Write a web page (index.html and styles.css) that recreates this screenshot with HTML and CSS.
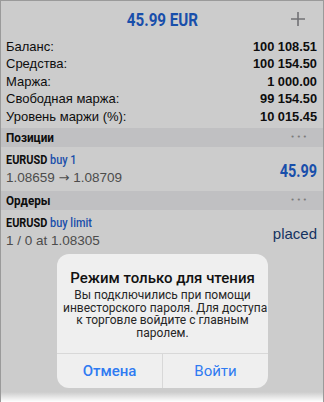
FILE: index.html
```html
<!DOCTYPE html>
<html lang="ru">
<head>
<meta charset="utf-8">
<link rel="stylesheet" href="styles.css">
</head>
<body>
<div class="screen">
  <div class="app">
    <header class="top">
      <div class="total">45.99 EUR</div>
      <svg class="plus" width="16" height="16" viewBox="0 0 16 16"><path d="M8 1v14M1 8h14" stroke="#8e8e93" stroke-width="1.6" fill="none"/></svg>
    </header>
    <div class="summary">
      <div class="row"><span>Баланс:</span><b>100 108.51</b></div>
      <div class="row"><span>Средства:</span><b>100 154.50</b></div>
      <div class="row"><span>Маржа:</span><b>1 000.00</b></div>
      <div class="row"><span>Свободная маржа:</span><b>99 154.50</b></div>
      <div class="row"><span>Уровень маржи (%):</span><b>10 015.45</b></div>
    </div>
    <div class="section"><span class="sec-title">Позиции</span><span class="dots">•••</span></div>
    <div class="item">
      <div class="info">
        <div class="sym">EURUSD <span class="blue">buy 1</span></div>
        <div class="sub">1.08659 <span class="arrow">→</span> 1.08709</div>
      </div>
      <div class="profit">45.99</div>
    </div>
    <div class="section"><span class="sec-title">Ордеры</span><span class="dots">•••</span></div>
    <div class="item">
      <div class="info">
        <div class="sym">EURUSD <span class="blue">buy limit</span></div>
        <div class="sub">1 / 0 at 1.08305</div>
      </div>
      <div class="state">placed</div>
    </div>
  </div>
  <div class="dim"></div>
  <div class="fade"></div>
  <div class="alert">
    <div class="alert-body">
      <div class="alert-title">Режим только для чтения</div>
      <div class="alert-msg">Вы подключились при помощи<br>инвесторского пароля. Для доступа<br>к торговле войдите с главным<br>паролем.</div>
    </div>
    <div class="alert-buttons">
      <div class="btn cancel">Отмена</div>
      <div class="btn">Войти</div>
    </div>
  </div>
</div>
</body>
</html>
```
FILE: styles.css
```css
html, body { margin: 0; padding: 0; }
body { width: 324px; height: 402px; overflow: hidden; background: #fff; }
.screen {
  position: relative;
  width: 324px; height: 402px;
  box-sizing: border-box;
  border: 1px solid #9a9a9a;
  border-bottom: none;
  overflow: hidden;
  font-family: "Liberation Sans", Arial, sans-serif;
  color: #111;
}
.app { background: #fff; height: 100%; }
.top {
  height: 36px;
  display: flex; align-items: center; justify-content: center;
  position: relative;
}
.total {
  font-family: "Roboto", sans-serif;
  font-weight: bold; font-size: 18.5px; color: #1f63d6;
  margin-top: 1px;
  transform: scaleX(0.82);
}
.plus { position: absolute; right: 17px; top: 10px; }
.summary { padding: 1px 6px 3px 5px; }
.row {
  display: flex; justify-content: space-between;
  font-size: 13px; line-height: 17.4px; height: 17.4px;
}
.row b { font-weight: bold; font-size: 12.8px; }
.section {
  background: #f0f0f3;
  height: 19px;
  display: flex; justify-content: space-between; align-items: center;
  padding: 0 14px 0 5px;
}
.sec-title {
  font-family: "Roboto", sans-serif;
  font-weight: bold; font-size: 13px;
  display: inline-block; transform: scaleX(0.9); transform-origin: left center;
}
.dots { color: #9a9a9a; font-size: 7px; letter-spacing: 2px; font-family: "DejaVu Sans", sans-serif; }
.item {
  height: 44px;
  display: flex; justify-content: space-between; align-items: center;
  padding: 0 6px 0 5px;
}
.sym {
  font-family: "Roboto", sans-serif;
  font-weight: bold; font-size: 13px; line-height: 16px;
  transform: scaleX(0.84); transform-origin: left center;
  white-space: nowrap;
}
.blue { color: #1f63d6; font-weight: 500; }
.sub { font-size: 13.5px; color: #606060; line-height: 17px; margin-top: 1px; white-space: nowrap; }
.arrow { font-family: "DejaVu Sans", sans-serif; font-size: 13px; }
.profit {
  font-family: "Roboto", sans-serif;
  font-weight: bold; font-size: 19px; color: #1f63d6; margin-top: 4px;
  transform: scaleX(0.76); transform-origin: right center;
}
.state { font-size: 15px; color: #1a3f7a; margin-top: 4px; }
.dim { position: absolute; inset: 0; background: rgba(0, 0, 0, 0.2); }
.fade {
  position: absolute; left: 0; right: 0; bottom: 0; height: 10px;
  background: linear-gradient(to bottom, rgba(255,255,255,0), #fff);
}
.alert {
  position: absolute; left: 56px; top: 253px;
  width: 211px;
  background: #efefef;
  border-radius: 12px;
  overflow: hidden;
  font-family: "Roboto", "Liberation Sans", sans-serif;
  text-align: center;
}
.alert-body { padding: 15px 6px 13px; }
.alert-title { font-size: 15px; font-weight: 500; color: #111; line-height: 18px; }
.alert-msg { font-size: 12px; line-height: 12.7px; color: #262626; margin-top: 2px; white-space: nowrap; }
.alert-buttons { display: flex; border-top: 1px solid #d8d8d8; height: 34px; }
.btn {
  flex: 1; display: flex; align-items: center; justify-content: center;
  font-size: 15px; color: #2f7bf2;
}
.btn + .btn { border-left: 1px solid #d8d8d8; }
.cancel { font-weight: 500; }
```
